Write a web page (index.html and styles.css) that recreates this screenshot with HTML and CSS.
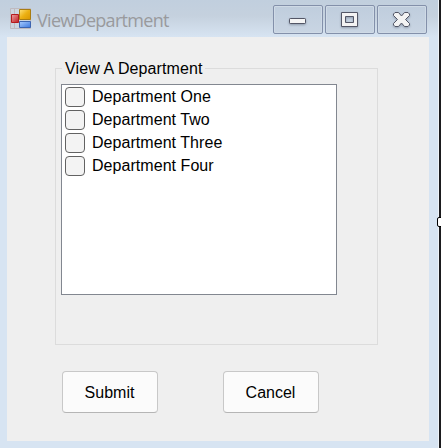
FILE: index.html
```html
<!DOCTYPE html>
<html lang="en">
<head>
<meta charset="utf-8">
<title>ViewDepartment</title>
<link rel="stylesheet" href="styles.css">
</head>
<body>
<div class="window">
  <header class="titlebar">
    <svg class="app-icon" width="21" height="21" viewBox="0 0 21 21">
      <defs>
        <linearGradient id="red" x2="1" y2="1"><stop stop-color="#f0a0a0"/><stop offset="1" stop-color="#bd1c20"/></linearGradient>
        <linearGradient id="gold" x2="1" y2="1"><stop stop-color="#ffe27a"/><stop offset=".5" stop-color="#ecb012"/><stop offset="1" stop-color="#d89500"/></linearGradient>
        <linearGradient id="blue" x2="1" y2="1"><stop stop-color="#a9ccff"/><stop offset="1" stop-color="#3c78df"/></linearGradient>
      </defs>
      <path d="M.5.5h20v20H.5zM4.5.5v20" fill="#cdd5df" stroke="#bfbabf"/>
      <path d="M1.500 6.500h7v8h-7z" fill="url(#red)" stroke="#b51a1d"/>
      <path d="M9.500 1.500h11v10h-11z" fill="url(#gold)" stroke="#a97d12"/>
      <path d="M9.500 13.500h11v6h-11z" fill="url(#blue)" stroke="#3c64b0"/>
    </svg>
    <h1 class="title">ViewDepartment</h1>
    <div class="controls">
      <button class="control" aria-label="Minimize">
        <svg width="18" height="17" viewBox="0 0 18 17"><rect x=".5" y="6.500" width="16" height="5" rx=".7" fill="#f5f5f5" stroke="#535666"/></svg>
      </button>
      <button class="control" aria-label="Maximize">
        <svg width="18" height="17" viewBox="0 0 18 17"><path fill-rule="evenodd" d="M.5.5h16v14H.5zM4.500 4.500v6h8v-6z" fill="#f3f3f3" stroke="#535666"/></svg>
      </button>
      <button class="control" aria-label="Close">
        <svg width="18" height="17" viewBox="0 0 18 17"><path d="M2 .5h3.500l3 3.500 3-3.500H15L16.500 2v1.500l-4 4 4 4V13L15 14.500h-3.500l-3-3.500-3 3.500H2L.5 13v-1.500l4-4-4-4V2z" fill="#f3f3f3" stroke="#535666"/></svg>
      </button>
    </div>
  </header>
  <main class="client">
    <fieldset class="group">
      <legend>View A Department</legend>
      <div class="list">
        <label class="item"><input type="checkbox">Department One</label>
        <label class="item"><input type="checkbox">Department Two</label>
        <label class="item"><input type="checkbox">Department Three</label>
        <label class="item"><input type="checkbox">Department Four</label>
      </div>
    </fieldset>
    <div class="actions">
      <button class="action">Submit</button>
      <button class="action">Cancel</button>
    </div>
  </main>
</div>
<span class="resize-handle"></span>
</body>
</html>
```
FILE: styles.css
```css
* { box-sizing: border-box; }

body {
  position: relative;
  margin: 0;
  font: 16px/18px "Liberation Sans", Arial, sans-serif;
  color: #000;
  overflow: hidden;
}

.window {
  width: 441px;
  height: 448px;
  padding: 0 10px 7px 7px;
  border-right: 2px solid #1b1b1e;
  background: linear-gradient(#c1cfde, #c5d1de 16px, #d7e4f2 37px);
  box-shadow: inset -1px 0 #eef3f8;
}

.titlebar {
  display: flex;
  height: 37px;
  padding: 5px 2px 0 3px;
}

.app-icon { margin-top: 3px; }

.title {
  flex: 1;
  margin: 3px 0 0 6px;
  font: 18px/24px "Open Sans", "Noto Sans", sans-serif;
  letter-spacing: -0.7px;
  color: #999a9d;
}

.controls {
  display: flex;
  gap: 2px;
}

.control {
  display: flex;
  align-items: flex-start;
  width: 50px;
  height: 29px;
  padding: 6px 0 0 15px;
  border: 1px solid #8390aa;
  border-radius: 2px;
  background: linear-gradient(#bfcddd, #c9d5e3);
  box-shadow: inset 0 0 0 1px #cfdae6;
}

.control svg { filter: drop-shadow(0 1px 1px #8f9bab); }

.client {
  height: 404px;
  padding: 23px 51px 0 48px;
  background: #efefef;
}

.group {
  min-width: 0;
  width: 323px;
  height: 285px;
  margin: 0;
  padding: 0 0 0 5px;
  border: 1px solid #dcdcdc;
}

legend {
  margin-left: 1px;
  padding: 1px 3px 0;
  line-height: 16px;
  letter-spacing: 0.1px;
}

.list {
  width: 276px;
  height: 211px;
  margin-top: 7px;
  padding: 0 3px;
  border: 1px solid #828790;
  background: #fff;
}

.item {
  display: flex;
  align-items: center;
  gap: 7px;
  height: 23px;
  letter-spacing: 0.05px;
}

.item input {
  appearance: none;
  width: 20px;
  height: 20px;
  margin: 0;
  border: 1px solid #626262;
  border-radius: 4px;
  background: #f3f3f3;
}

.actions {
  display: flex;
  gap: 65px;
  padding: 26px 0 0 7px;
}

.action {
  width: 96px;
  height: 42px;
  padding: 2px 1px 0 0;
  border: 1px solid #c8c8c8;
  border-bottom-color: #b5b5b5;
  border-radius: 4px;
  background: #fbfbfb;
  font: inherit;
  color: inherit;
}

.resize-handle {
  position: absolute;
  top: 217px;
  right: -4px;
  width: 8px;
  height: 10px;
  border: 1px solid #000;
  border-radius: 2px;
  background: #fff;
}
```
